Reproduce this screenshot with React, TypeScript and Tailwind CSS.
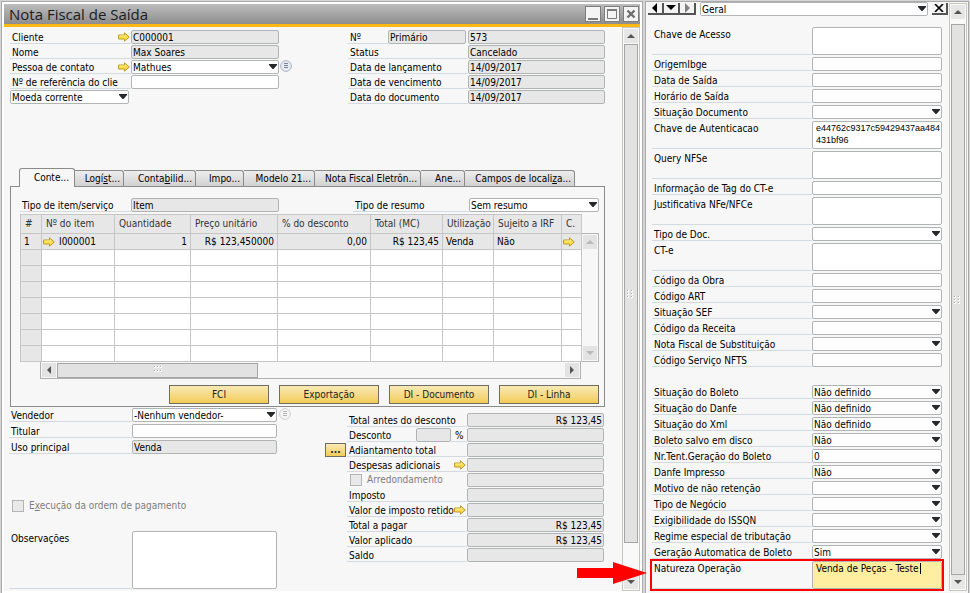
import React from "react";

const fieldBase =
  "block min-w-0 rounded-[2px] border border-[#b1b4b5] px-px text-[10px] text-black outline-none";

type FieldProps = {
  id: string;
  value?: string;
  kind?: "text" | "select" | "area";
  disabled?: boolean;
  className?: string;
  align?: "left" | "right";
};

function Field({ id, value = "", kind = "text", disabled, className = "", align }: FieldProps) {
  const tone = disabled ? "bg-[#e7e7e7]" : "bg-white";
  if (kind === "select") {
    return (
      <div className={`relative h-[14px] ${className}`}>
        <select id={id} defaultValue={value} className={`${fieldBase} ${tone} h-[14px] w-full appearance-none pt-px leading-[11px]`}>
          <option>{value}</option>
        </select>
        <svg viewBox="0 0 8 5" className="pointer-events-none absolute top-1 right-[2px] h-[5px] w-2">
          <path d="M0 0h8v1L4.500 5h-1L0 1z" fill="#26282b" />
        </svg>
      </div>
    );
  }
  if (kind === "area") {
    return (
      <textarea
        id={id}
        defaultValue={value}
        className={`${fieldBase} ${tone} resize-none overflow-hidden leading-[12px] ${className}`}
      />
    );
  }
  return (
    <input
      id={id}
      defaultValue={value}
      readOnly={disabled}
      className={`${fieldBase} ${tone} h-[14px] pt-px leading-[11px] ${align === "right" ? "text-right" : ""} ${className}`}
    />
  );
}

function Label({ id, children, className = "" }: { id: string; children: React.ReactNode; className?: string }) {
  return (
    <label htmlFor={id} className={`block border-b border-[#d3dae0] pl-[2px] leading-[16px] whitespace-nowrap ${className}`}>
      {children}
    </label>
  );
}

function LinkArrow({ className = "" }: { className?: string }) {
  return (
    <svg viewBox="0 0 12 10" className={`h-[10px] w-3 shrink-0 ${className}`}>
      <path d="M.5 3h6V.8L11.300 5 6.500 9.200V7h-6z" fill="#fbdc4e" stroke="#bd9b2c" strokeWidth="1" strokeLinejoin="round" />
      <path d="M1.500 4h6V3" fill="none" stroke="#fff3a8" strokeWidth=".8" />
    </svg>
  );
}

function ListBadge({ muted }: { muted?: boolean }) {
  const ring = muted ? "#cfcfcf" : "#aeb5c8";
  const line = muted ? "#b5b5b5" : "#7b849c";
  return (
    <svg viewBox="0 0 12 12" className="h-3 w-3 shrink-0">
      <circle cx="6" cy="6" r="5.400" fill={muted ? "#f4f4f4" : "#e6eaf3"} stroke={ring} />
      <path d="M4 3.500h4M4 5.500h4M4 7.500h4" stroke={line} strokeWidth="1" />
    </svg>
  );
}

function Triangle({ dir, color = "#555" }: { dir: "up" | "down" | "left" | "right"; color?: string }) {
  const paths = {
    up: "M0 6 4 2l4 4z",
    down: "M0 2h8L4 6z",
    left: "M6 0v8L2 4z",
    right: "M2 0v8l4-4z",
  };
  return (
    <svg viewBox="0 0 8 8" className="h-2 w-2">
      <path d={paths[dir]} fill={color} />
    </svg>
  );
}

function Grip({ vertical }: { vertical?: boolean }) {
  const dots = [0, 3, 6].flatMap((a) => [0, 4].map((b) => (vertical ? [b, a] : [a, b])));
  return (
    <svg viewBox="0 0 8 8" className="h-2 w-2">
      {dots.map(([x, y]) => (
        <g key={`${x}-${y}`}>
          <rect x={x} y={y} width="2" height="2" fill="#fff" />
          <rect x={x} y={y} width="1" height="1" fill="#aaa" />
        </g>
      ))}
    </svg>
  );
}

function ScrollColumn({ thumb }: { thumb: string }) {
  return (
    <div className="flex w-[18px] shrink-0 flex-col items-center border border-[#c6c7bf] bg-[#f9f9f9] py-px">
      <button aria-label="Rolar para cima" className="flex h-[14px] w-[14px] items-center justify-center bg-[#e6e6e6]">
        <Triangle dir="up" />
      </button>
      <div className={`flex w-[14px] items-center justify-center border border-[#a5a5a5] bg-[#e2e2e2] ${thumb}`}>
        <Grip vertical />
      </div>
      <button aria-label="Rolar para baixo" className="mt-auto flex h-[14px] w-[14px] items-center justify-center bg-[#e6e6e6]">
        <Triangle dir="down" />
      </button>
    </div>
  );
}

const yellowButton = "border border-[#6f6c62] bg-linear-to-b from-[#f8e9b4] to-[#f3cc55] text-center text-[#222]";

const tabs: { text: React.ReactNode; width: string }[] = [
  { text: <>Logí<u>s</u>t...</>, width: "w-[49px]" },
  { text: <>Conta<u>b</u>ilid...</>, width: "w-[72px]" },
  { text: "Impo...", width: "w-[48px]" },
  { text: "Modelo 21...", width: "w-[71px]" },
  { text: "Nota Fiscal Eletrôn...", width: "w-[106px]" },
  { text: "Ane...", width: "w-[44px]" },
  { text: <>Campos de locali<u>z</u>a...</>, width: "w-[110px]" },
];

const columns = [
  { title: "#", width: "w-[21px]" },
  { title: "Nº do item", width: "w-[73px]" },
  { title: "Quantidade", width: "w-[76px]" },
  { title: "Preço unitário", width: "w-[87px]" },
  { title: "% do desconto", width: "w-[93px]" },
  { title: "Total (MC)", width: "w-[72px]" },
  { title: "Utilização", width: "w-[51px]" },
  { title: "Sujeito a IRF", width: "w-[68px]" },
  { title: "C.", width: "" },
];

const firstRow: { node: React.ReactNode; align: string }[] = [
  { node: "1", align: "text-left" },
  { node: <span className="flex items-center gap-1"><LinkArrow />I000001</span>, align: "text-left" },
  { node: "1", align: "text-right" },
  { node: "R$ 123,450000", align: "text-right" },
  { node: "0,00", align: "text-right" },
  { node: "R$ 123,45", align: "text-right" },
  { node: "Venda", align: "text-left" },
  { node: "Não", align: "text-left" },
  { node: <LinkArrow />, align: "text-left" },
];

function ItemsTable() {
  return (
    <div className="min-w-0 flex-1">
      <table className="w-full table-fixed border-separate border-spacing-0 border-r border-b border-[#c6c6c6] bg-white">
        <thead>
          <tr>
            {columns.map((c) => (
              <th
                key={c.title}
                className={`h-[19px] border-t border-l border-[#c6c6c6] bg-[#e7e7e7] p-0 pl-1 text-left font-normal whitespace-nowrap text-[#333] ${c.width}`}
              >
                {c.title}
              </th>
            ))}
          </tr>
        </thead>
        <tbody>
          <tr>
            {firstRow.map((c, i) => (
              <td
                key={i}
                className={`h-4 border-t border-l border-[#c6c6c6] bg-[#e7e7e7] p-0 leading-[15px] whitespace-nowrap ${i === 1 || i === 8 ? "px-px" : "px-[3px]"} ${c.align}`}
              >
                {c.node}
              </td>
            ))}
          </tr>
          {[1, 2, 3, 4, 5, 6, 7].map((r) => (
            <tr key={r}>
              {columns.map((c, i) => (
                <td key={c.title} className={`h-4 border-t border-l border-[#c6c6c6] p-0 ${i === 0 ? "bg-[#e7e7e7]" : ""}`} />
              ))}
            </tr>
          ))}
        </tbody>
      </table>
    </div>
  );
}

function ItemsPanel() {
  return (
    <section>
      <div className="flex items-end pl-[9px]">
        <button className="relative -mb-px h-[19px] w-[56px] rounded-t-[3px] border border-b-0 border-[#8a8a8a] bg-[#f7f7f7] pr-[5px] text-right">
          Conte...
        </button>
        {tabs.map((t, i) => (
          <button
            key={i}
            className={`h-4 rounded-tr-[3px] border-t border-r border-[#8a8a8a] bg-linear-to-b from-[#ededed] to-[#d2d2d2] pr-[3px] text-right whitespace-nowrap ${t.width}`}
          >
            {t.text}
          </button>
        ))}
      </div>
      <div className="border border-[#8a8a8a] pt-[11px] pr-[5px] pb-[2px] pl-[9px]">
        <div className="flex h-[14px] justify-between">
          <div className="flex">
            <Label id="tipo-item" className="w-[111px]">Tipo de item/serviço</Label>
            <Field id="tipo-item" value="Item" disabled className="w-[148px]" />
          </div>
          <div className="flex">
            <Label id="tipo-resumo" className="w-[116px]">Tipo de resumo</Label>
            <Field id="tipo-resumo" value="Sem resumo" kind="select" className="w-[130px]" />
          </div>
        </div>
        <div className="mt-[2px] flex">
          <ItemsTable />
          <div className="mt-[19px] flex w-[17px] shrink-0 flex-col items-center justify-between border-t border-r border-b border-[#b5b5b5] p-px">
            <button aria-label="Linha acima" className="flex h-[14px] w-[14px] items-center justify-center bg-[#e3e3e3]">
              <Triangle dir="up" color="#b9b9b9" />
            </button>
            <button aria-label="Linha abaixo" className="flex h-[14px] w-[14px] items-center justify-center bg-[#e3e3e3]">
              <Triangle dir="down" color="#b9b9b9" />
            </button>
          </div>
        </div>
        <div className="mr-[18px] ml-5 flex h-[17px] items-center justify-between border border-t-0 border-[#b0b0b0] px-px">
          <div className="flex items-center gap-px">
            <button aria-label="Rolar para a esquerda" className="flex h-[14px] w-[14px] items-center justify-center bg-[#e3e3e3]">
              <Triangle dir="left" />
            </button>
            <div className="flex h-[15px] w-[201px] items-center justify-center border border-[#a5a5a5] bg-[#e2e2e2]">
              <Grip />
            </div>
          </div>
          <button aria-label="Rolar para a direita" className="flex h-[14px] w-[14px] items-center justify-center bg-[#e3e3e3]">
            <Triangle dir="right" />
          </button>
        </div>
        <div className="mt-[6px] flex justify-end gap-[10px]">
          {["FCI", "Exportação", "DI - Documento", "DI - Linha"].map((b) => (
            <button key={b} className={`h-[19px] w-[100px] ${yellowButton}`}>{b}</button>
          ))}
        </div>
      </div>
    </section>
  );
}

function HeaderForm() {
  return (
    <div className="flex justify-between pt-[3px]">
      <div className="flex flex-col gap-px">
        <div className="flex h-[14px]">
          <Label id="cliente" className="w-[108px]">Cliente</Label>
          <span className="flex w-[13px] items-center border-b border-[#d3dae0]"><LinkArrow /></span>
          <Field id="cliente" value="C000001" disabled className="w-[148px]" />
        </div>
        <div className="flex h-[14px]">
          <Label id="nome" className="w-[121px]">Nome</Label>
          <Field id="nome" value="Max Soares" disabled className="w-[148px]" />
        </div>
        <div className="flex h-[14px]">
          <Label id="contato" className="w-[108px]">Pessoa de contato</Label>
          <span className="flex w-[13px] items-center border-b border-[#d3dae0]"><LinkArrow /></span>
          <Field id="contato" value="Mathues" kind="select" className="mr-px w-[148px]" />
          <ListBadge />
        </div>
        <div className="flex h-[14px]">
          <Label id="referencia" className="w-[121px]">Nº de referência do clie</Label>
          <Field id="referencia" className="w-[148px]" />
        </div>
        <Field id="moeda" value="Moeda corrente" kind="select" className="w-[119px]" />
      </div>
      <div className="flex flex-col gap-px">
        <div className="flex h-[14px]">
          <Label id="numero" className="w-10">Nº</Label>
          <Field id="serie" value="Primário" disabled className="mr-[2px] w-[78px]" />
          <Field id="numero" value="573" disabled className="w-[137px]" />
        </div>
        {[
          ["Status", "Cancelado"],
          ["Data de lançamento", "14/09/2017"],
          ["Data de vencimento", "14/09/2017"],
          ["Data do documento", "14/09/2017"],
        ].map(([label, value]) => (
          <div key={label} className="flex h-[14px]">
            <Label id={label} className="w-[120px]">{label}</Label>
            <Field id={label} value={value} disabled className="w-[137px]" />
          </div>
        ))}
      </div>
    </div>
  );
}

const tick = "m-0 h-3 w-3 shrink-0 appearance-none border border-[#b4b4b4] bg-[#e9e9e9]";

function TotalRow({ label, value, children }: { label: string; value?: string; children?: React.ReactNode }) {
  return (
    <div className="flex h-[14px]">
      <div className="flex w-[120px] border-b border-[#d3dae0]">
        <label htmlFor={label} className="w-[107px] pl-[2px] leading-[16px] whitespace-nowrap">{label}</label>
        {children}
      </div>
      <Field id={label} value={value} disabled align="right" className="w-[137px]" />
    </div>
  );
}

function FooterForm() {
  return (
    <div className="flex justify-between pt-px">
      <div className="-ml-px">
        <div className="flex flex-col gap-[2px]">
          <div className="flex h-[14px]">
            <Label id="vendedor" className="w-[123px]">Vendedor</Label>
            <Field id="vendedor" value="-Nenhum vendedor-" kind="select" className="mr-[2px] w-[145px]" />
            <ListBadge muted />
          </div>
          <div className="flex h-[14px]">
            <Label id="titular" className="w-[123px]">Titular</Label>
            <Field id="titular" className="w-[145px]" />
          </div>
          <div className="flex h-[14px]">
            <Label id="uso" className="w-[123px]">Uso principal</Label>
            <Field id="uso" value="Venda" disabled className="w-[145px]" />
          </div>
        </div>
        <label className="mt-[46px] flex h-3 items-center gap-[5px] pl-[3px] text-[#7d7d7d]">
          <input type="checkbox" className={tick} />
          <span>E<u>x</u>ecução da ordem de pagamento</span>
        </label>
        <div className="mt-[19px] flex h-[58px]">
          <Label id="obs" className="w-[123px]">Observações</Label>
          <Field id="obs" kind="area" className="w-[145px]" />
        </div>
      </div>
      <div className="flex items-start gap-px pt-[5px] pr-px">
        <button className={`mt-[30px] h-[14px] w-[21px] leading-[10px] font-bold ${yellowButton}`}>...</button>
        <div className="flex flex-col gap-px">
          <TotalRow label="Total antes do desconto" value="R$ 123,45" />
          <div className="flex h-[14px]">
            <Label id="desconto" className="w-[69px]">Desconto</Label>
            <Field id="desconto" disabled className="w-[35px]" />
            <span className="w-4 border-b border-[#d3dae0] pl-1 leading-[16px]">%</span>
            <input aria-label="Valor do desconto" readOnly className={`${fieldBase} h-[14px] w-[137px] bg-[#e7e7e7]`} />
          </div>
          <TotalRow label="Adiantamento total" />
          <TotalRow label="Despesas adicionais"><LinkArrow className="mt-[2px]" /></TotalRow>
          <div className="flex h-[14px]">
            <label className="flex w-[120px] items-center gap-[5px] pl-[3px] text-[#7d7d7d]">
              <input type="checkbox" className={tick} />
              <span className="leading-[16px]">Arredondamento</span>
            </label>
            <input aria-label="Valor do arredondamento" readOnly className={`${fieldBase} h-[14px] w-[137px] bg-[#e7e7e7]`} />
          </div>
          <TotalRow label="Imposto" />
          <TotalRow label="Valor de imposto retido"><LinkArrow className="mt-[2px]" /></TotalRow>
          <TotalRow label="Total a pagar" value="R$ 123,45" />
          <TotalRow label="Valor aplicado" value="R$ 123,45" />
          <TotalRow label="Saldo" />
        </div>
      </div>
    </div>
  );
}

const captionButton = "flex h-4 w-4 items-center justify-center border border-[#7d7d7d] bg-[#f4f4f4]";

function InvoiceWindow() {
  return (
    <main className="flex min-w-0 flex-1 flex-col border border-[#a9a9a9] bg-white p-[2px]">
      <header className="flex h-[23px] items-center justify-between border-b-[3px] border-[#fdb813] bg-linear-to-b from-[#bdbdbd] to-[#8e8e8e] pr-px pl-[5px]">
        <h1 className="font-['Open_Sans','Noto_Sans',sans-serif] text-[15px] leading-5 text-[#1c1c1c]">Nota Fiscal de Saída</h1>
        <div className="flex gap-[3px]">
          <button aria-label="Minimizar" className={captionButton}>
            <svg viewBox="0 0 14 14" className="h-[14px] w-[14px]"><path d="M2 12h10" stroke="#7a7a7a" strokeWidth="2" /></svg>
          </button>
          <button aria-label="Maximizar" className={captionButton}>
            <svg viewBox="0 0 14 14" className="h-[14px] w-[14px]"><path d="M2.500 3h9v8.500h-9z" fill="none" stroke="#7a7a7a" /><path d="M2 3h10" stroke="#7a7a7a" strokeWidth="2" /></svg>
          </button>
          <button aria-label="Fechar" className={captionButton}>
            <svg viewBox="0 0 14 14" className="h-[14px] w-[14px]"><path d="m3.500 3.500 7 7m0-7-7 7" stroke="#6e6e6e" strokeWidth="2.400" /></svg>
          </button>
        </div>
      </header>
      <div className="flex flex-1 bg-[#f7f7f7]">
        <div className="flex min-w-0 flex-1 flex-col pr-[17px] pl-[6px]">
          <HeaderForm />
          <div className="h-16" />
          <ItemsPanel />
          <FooterForm />
        </div>
        <ScrollColumn thumb="mt-px h-[499px]" />
      </div>
    </main>
  );
}

type SideRow = { label: string; kind?: "text" | "select" | "area"; value?: string };

const sideRows: SideRow[] = [
  { label: "Chave de Acesso", kind: "area" },
  { label: "OrigemIbge" },
  { label: "Data de Saída" },
  { label: "Horário de Saída" },
  { label: "Situação Documento", kind: "select" },
  { label: "Chave de Autenticacao", kind: "area", value: "e44762c9317c59429437aa484431bf96" },
  { label: "Query NFSe", kind: "area" },
  { label: "Informação de Tag do CT-e" },
  { label: "Justificativa NFe/NFCe", kind: "area" },
  { label: "Tipo de Doc.", kind: "select" },
  { label: "CT-e", kind: "area" },
  { label: "Código da Obra" },
  { label: "Código ART" },
  { label: "Situação SEF", kind: "select" },
  { label: "Código da Receita" },
  { label: "Nota Fiscal de Substituição", kind: "select" },
  { label: "Código Serviço NFTS" },
];

const statusRows: SideRow[] = [
  { label: "Situação do Boleto", kind: "select", value: "Não definido" },
  { label: "Situação do Danfe", kind: "select", value: "Não definido" },
  { label: "Situação do Xml", kind: "select", value: "Não definido" },
  { label: "Boleto salvo em disco", kind: "select", value: "Não" },
  { label: "Nr.Tent.Geração do Boleto", value: "0" },
  { label: "Danfe Impresso", kind: "select", value: "Não" },
  { label: "Motivo de não retenção", kind: "select" },
  { label: "Tipo de Negócio", kind: "select" },
  { label: "Exigibilidade do ISSQN", kind: "select" },
  { label: "Regime especial de tributação", kind: "select" },
  { label: "Geração Automatica de Boleto", kind: "select", value: "Sim" },
];

function SideField({ label, kind = "text", value }: SideRow) {
  const area = kind === "area";
  return (
    <div className={`flex ${area ? "h-7" : "h-[14px]"}`}>
      <Label id={label} className="w-40 shrink-0">{label}</Label>
      {area ? (
        <textarea
          id={label}
          defaultValue={value}
          className="block min-w-0 flex-1 resize-none overflow-hidden rounded-[2px] border border-[#b1b4b5] bg-white pl-[3px] font-['Liberation_Sans',Arial,sans-serif] text-[9px] leading-[12px] break-all text-black outline-none"
        />
      ) : (
        <Field id={label} kind={kind} value={value} className="flex-1" />
      )}
    </div>
  );
}

const navButton = "flex h-3 w-4 items-center justify-center border-r-2 border-b-2 border-[#555] bg-[#f3f3f3]";

function SidePanel() {
  return (
    <aside className="flex w-[324px] shrink-0 border border-[#a9a9a9] bg-[#f7f7f7] pt-px pr-px pb-[2px]">
      <div className="min-w-0 flex-1">
        <div className="flex h-3 pr-px pl-[2px]">
          <button aria-label="Anterior" className={navButton}>
            <svg viewBox="0 0 10 10" className="h-[10px] w-[10px]"><path d="M7 0v10L2 5z" fill="#000" /></svg>
          </button>
          <button aria-label="Lista" className={navButton}>
            <svg viewBox="0 0 10 10" className="h-[10px] w-[10px]"><path d="M0 2h10L5 7z" fill="#000" /></svg>
          </button>
          <button aria-label="Próximo" className={navButton}>
            <svg viewBox="0 0 10 10" className="h-[10px] w-[10px]"><path d="M3 0v10l5-5z" fill="#808080" /></svg>
          </button>
          <Field id="categoria" value="Geral" kind="select" className="-mt-px ml-1 flex-1" />
          <button aria-label="Fechar painel" className={`ml-1 ${navButton}`}>
            <svg viewBox="0 0 10 8" className="h-2 w-[10px]"><path d="m1 0 8 8m0-8L1 8" stroke="#000" strokeWidth="1.600" /></svg>
          </button>
        </div>
        <div className="mt-3 flex flex-col gap-[2px] pr-[7px] pl-[6px]">
          {sideRows.map((r) => <SideField key={r.label} {...r} />)}
          <div className="h-[14px]" />
          {statusRows.map((r) => <SideField key={r.label} {...r} />)}
          <div className="relative flex h-7">
            <Label id="natureza" className="w-40 shrink-0">Natureza Operação</Label>
            <textarea
              id="natureza"
              defaultValue="Venda de Peças - Teste"
              className="block min-w-0 flex-1 resize-none overflow-hidden rounded-[2px] border border-[#b1b4b5] bg-[#ffee9f] pl-[3px] text-[10px] leading-[14px] text-black outline-none"
            />
            <span className="pointer-events-none absolute top-[2px] right-[21px] h-[11px] w-px bg-black" />
            <div className="pointer-events-none absolute -inset-[2px] border-2 border-[#f00]" />
            <svg viewBox="0 0 70 22" className="pointer-events-none absolute top-px right-full mr-[5px] h-[22px] w-[70px]">
              <path d="M0 6h36V0l34 11-34 11v-6H0z" fill="#f00" />
            </svg>
          </div>
        </div>
      </div>
      <ScrollColumn thumb="mt-[5px] h-[551px]" />
    </aside>
  );
}

export default function App() {
  return (
    <div className="flex min-h-screen gap-[2px] bg-[#d6d6d6] p-px font-['DejaVu_Sans_Condensed','DejaVu_Sans',sans-serif] text-[10px] leading-[14px] text-black">
      <InvoiceWindow />
      <SidePanel />
    </div>
  );
}
